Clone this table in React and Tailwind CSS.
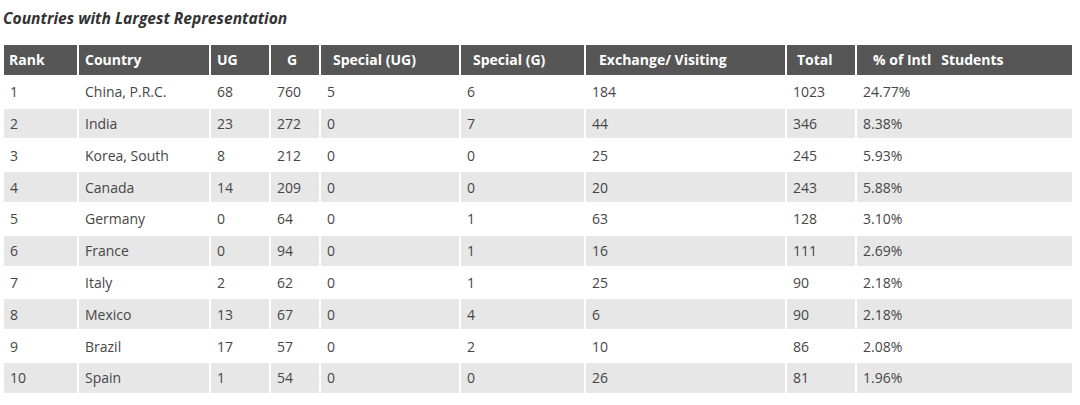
import React from "react";

const rows = [
  ["1", "China, P.R.C.", "68", "760", "5", "6", "184", "1023", "24.77%"],
  ["2", "India", "23", "272", "0", "7", "44", "346", "8.38%"],
  ["3", "Korea, South", "8", "212", "0", "0", "25", "245", "5.93%"],
  ["4", "Canada", "14", "209", "0", "0", "20", "243", "5.88%"],
  ["5", "Germany", "0", "64", "0", "1", "63", "128", "3.10%"],
  ["6", "France", "0", "94", "0", "1", "16", "111", "2.69%"],
  ["7", "Italy", "2", "62", "0", "1", "25", "90", "2.18%"],
  ["8", "Mexico", "13", "67", "0", "4", "6", "90", "2.18%"],
  ["9", "Brazil", "17", "57", "0", "2", "10", "86", "2.08%"],
  ["10", "Spain", "1", "54", "0", "0", "26", "81", "1.96%"],
];

export default function App() {
  return (
    <div
      className="w-[1080px] h-[405px] bg-white pt-[8px] text-[#464646]"
      style={{ fontFamily: '"Open Sans", "Liberation Sans", sans-serif' }}
    >
      <div className="pl-[3px] text-[15.6px] leading-[20px] font-bold italic text-[#333333]">
        Countries with Largest Representation
      </div>
      <table className="mt-[15px] ml-[2px] table-fixed border-separate border-spacing-[2px] text-[14px]">
        <colgroup>
          <col className="w-[73px]" />
          <col className="w-[130px]" />
          <col className="w-[58px]" />
          <col className="w-[48px]" />
          <col className="w-[138px]" />
          <col className="w-[123px]" />
          <col className="w-[199px]" />
          <col className="w-[68px]" />
          <col className="w-[215px]" />
        </colgroup>
        <thead>
          <tr className="h-[29.8px] bg-[#565656] text-white font-bold text-left">
            <th className="p-0 pl-[5px] font-bold">Rank</th>
            <th className="p-0 pl-[6px] font-bold">Country</th>
            <th className="p-0 pl-[6px] font-bold">UG</th>
            <th className="p-0 pl-[16px] font-bold">G</th>
            <th className="p-0 pl-[12px] font-bold">Special (UG)</th>
            <th className="p-0 pl-[12px] font-bold">Special (G)</th>
            <th className="p-0 pl-[13px] font-bold">Exchange/ Visiting</th>
            <th className="p-0 pl-[10px] font-bold">Total</th>
            <th className="p-0 pl-[16px] font-bold">
              % of Intl<span className="pl-[10px]">Students</span>
            </th>
          </tr>
        </thead>
        <tbody>
          {rows.map((r, i) => (
            <tr
              key={i}
              className={i % 2 === 1 ? "h-[29.8px] bg-[#e7e7e8]" : "h-[29.8px] bg-white"}
            >
              {r.map((c, j) => (
                <td key={j} className="p-0 pl-[6px] align-middle">
                  {c}
                </td>
              ))}
            </tr>
          ))}
        </tbody>
      </table>
    </div>
  );
}
